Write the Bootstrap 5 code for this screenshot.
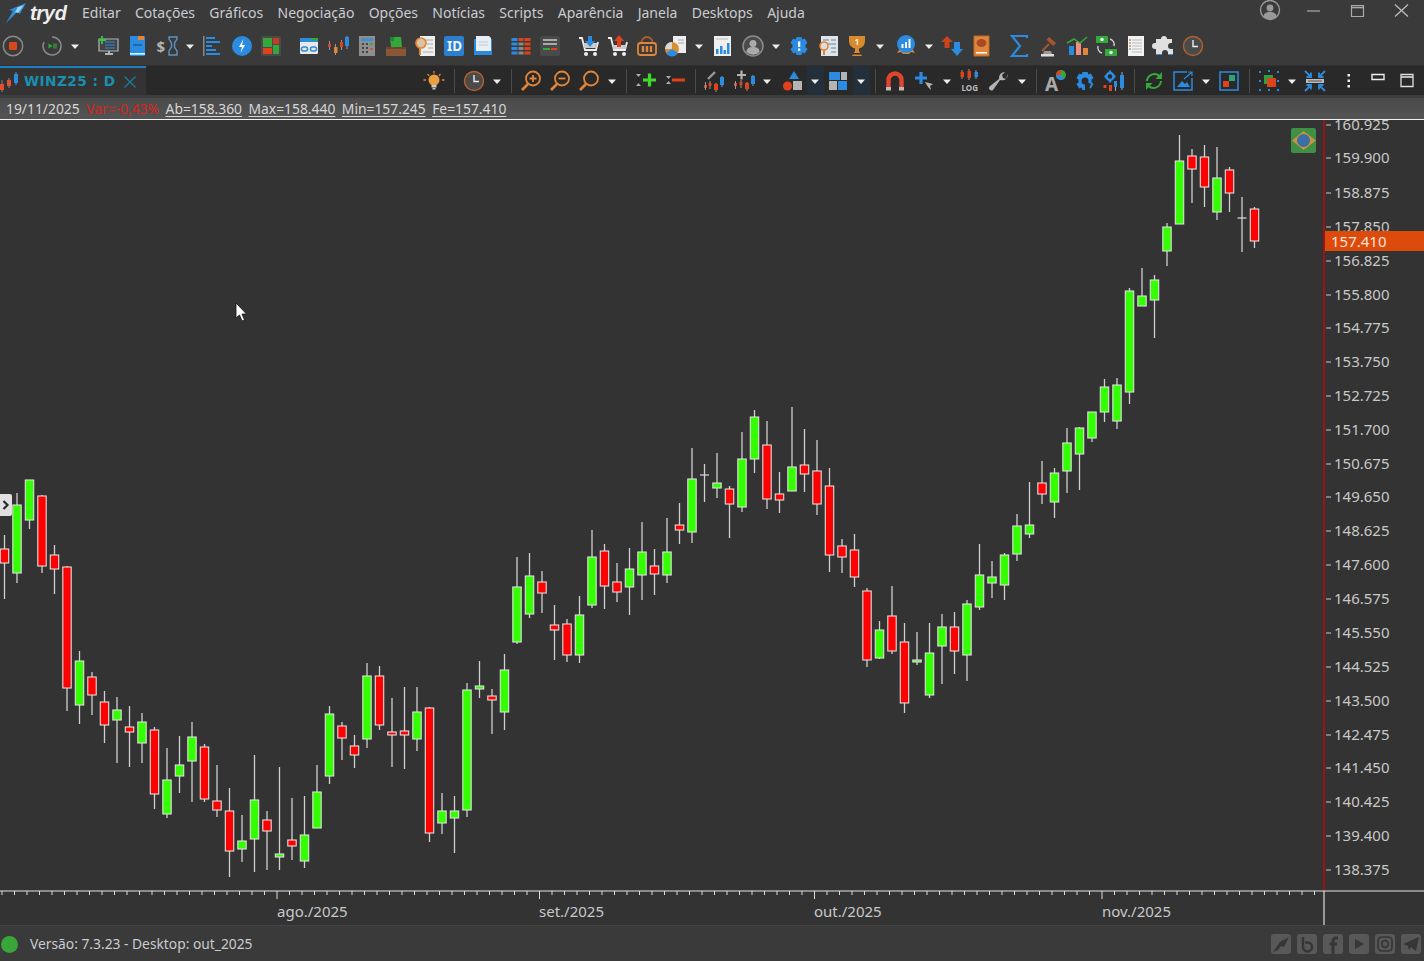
<!DOCTYPE html>
<html lang="pt-BR">
<head>
<meta charset="UTF-8">
<meta name="viewport" content="width=device-width, initial-scale=1.0">
<title>Tryd - WINZ25</title>
<link href="https://cdn.jsdelivr.net/npm/bootstrap@5.3.0/dist/css/bootstrap.min.css" rel="stylesheet">
<style>
body { background: #333; font-family: "Noto Sans", "Open Sans", sans-serif; color: #c9c9c9; width: 1424px; height: 961px; }
svg text { font-family: "Noto Sans", "Open Sans", sans-serif; }
.menu-row { height: 25px; background: #3a3a3a; padding-left: 5px; }
.logo-name { font-family: "Liberation Sans", sans-serif; font-weight: 700; font-style: italic; font-size: 20px; letter-spacing: -.3px; color: #eee; line-height: 24px; margin-left: 3px; width: 52px; }
.menu-item { font-size: 14px; color: #c9ccd0; line-height: 25px; }
.menu-list { gap: 14.3px; }
.win-ctl { width: 44px; height: 25px; }
.tool-row { height: 41px; background: #3a3a3a; margin-left: -1.5px; }
.tab-row { height: 29px; background: #292929; box-shadow: 0 -1px 0 #303030; }
.chart-tab { width: 146px; height: 29px; background: #333; border-top: 2px solid #1f7fc4; font-family: "DejaVu Sans", sans-serif; font-weight: 700; font-size: 13.7px; letter-spacing: .45px; color: #1a8fb0; }
.chart-tab-name { margin-left: 4px; }
.tool-group { padding-right: 2.5px; }
.t-ico { width: 29px; height: 24px; }
.t-car { width: 17px; height: 24px; }
.t-ico svg, .t-car svg { width: 24px; height: 24px; flex-shrink: 0; overflow: visible; }
.t-sep { width: 11px; height: 24px; }
.t-sep::after { content: ""; width: 1px; height: 24px; background: #4c4c4c; }
.t-box { height: 29px; background: #232f3b; }
.g1 { width: 1px; } .g2 { width: 2px; } .g3 { width: 3px; } .g5 { width: 5px; } .g9 { width: 9px; } .g10 { width: 10px; }
.band { height: 3px; background: #3d3d3d; }
.quote-bar { height: 22px; background: linear-gradient(#4b4b4b, #535353); border-bottom: 1px solid #f0f0f0; font-size: 13.85px; line-height: 20px; padding-left: 6px; color: #d6d6d6; gap: 6.500px; }
.quote-var { color: #d8241c; }
.quote-link { text-decoration: underline; text-underline-offset: 2px; }
.chart-area { height: 805px; }
.chart-area svg { display: block; }
.foot-bar { height: 36px; background: #3a3a3a; border-top: 1px solid #444; font-size: 13.8px; color: #c9ccd0; padding: 1px 3px 0 1px; }
.foot-dot { width: 17px; height: 17px; background: #3aa63a; border-radius: 50%; margin-right: 12px; }
.foot-social { gap: 6px; }
.foot-social svg { width: 20px; height: 20px; display: block; }
</style>
</head>
<body class="d-flex flex-column overflow-hidden">

<nav class="menu-row d-flex align-items-center">
  <svg width="22" height="22" viewBox="0 0 22 22"><path d="M1 21 8 9 4 8 21 1 15 12l-3-2z" fill="#2c8fd8"/><path d="M5 19 10 10l3 1 6-8-8 3 2-1z" fill="#9fd4f5"/></svg>
  <span class="logo-name">tryd</span>
  <div class="menu-list d-flex">
    <span class="menu-item">Editar</span>
    <span class="menu-item">Cotações</span>
    <span class="menu-item">Gráficos</span>
    <span class="menu-item">Negociação</span>
    <span class="menu-item">Opções</span>
    <span class="menu-item">Notícias</span>
    <span class="menu-item">Scripts</span>
    <span class="menu-item">Aparência</span>
    <span class="menu-item">Janela</span>
    <span class="menu-item">Desktops</span>
    <span class="menu-item">Ajuda</span>
  </div>
  <div class="ms-auto d-flex align-items-center">
    <svg class="win-ctl" viewBox="0 0 44 25"><circle cx="22" cy="10" r="9.5" fill="none" stroke="#999" stroke-width="1.4"/><circle cx="22" cy="8" r="3.4" fill="#999"/><path d="M15.5 17c0-4 3-5 6.500-5s6.500 1 6.500 5a9 9 0 0 1-13 0z" fill="#999"/></svg>
    <svg class="win-ctl" viewBox="0 0 44 25"><path d="M15 11h13" stroke="#aaa" stroke-width="1.2"/></svg>
    <svg class="win-ctl" viewBox="0 0 44 25"><path d="M15.500 5.500h12v11h-12z" fill="none" stroke="#aaa" stroke-width="1.200"/><path d="M15.500 7.500h12" stroke="#aaa" stroke-width="1.600"/></svg>
    <svg class="win-ctl" viewBox="0 0 44 25"><path d="M15 4.500l13 12M28 4.500l-13 12" stroke="#bbb" stroke-width="1.300"/></svg>
  </div>
</nav>

<div id="tools1" class="tool-row d-flex align-items-center"></div>

<div class="tab-row d-flex align-items-center justify-content-between">
  <div class="chart-tab d-flex align-items-center">
    <svg width="20" height="22" viewBox="0 0 20 22"><path d="M2 9v12M9 7v10M16 1v13" stroke="#888"/><rect x="0" y="13" width="4" height="6" fill="#e0502c"/><rect x="7" y="9" width="4" height="6" fill="#e0502c"/><rect x="14" y="3" width="4" height="9" fill="#2b8be0"/></svg>
    <span class="chart-tab-name">WINZ25 : D</span>
    <svg class="ms-2" width="14" height="14" viewBox="0 0 14 14"><path d="M1.500 1.500l11 11M12.500 1.500l-11 11" stroke="#1a7fa0" stroke-width="1.200"/></svg>
  </div>
  <div id="tools2" class="tool-group d-flex align-items-center"></div>
</div>
<div class="band"></div>

<div class="quote-bar d-flex align-items-center">
  <span>19/11/2025</span>
  <span class="quote-var">Var=-0,43%</span>
  <span class="quote-link">Ab=158.360</span>
  <span class="quote-link">Max=158.440</span>
  <span class="quote-link">Min=157.245</span>
  <span class="quote-link">Fe=157.410</span>
</div>

<div class="chart-area">
  <svg id="chart" width="1424" height="805" viewBox="0 120 1424 805"></svg>
</div>

<footer class="foot-bar d-flex align-items-center">
  <span class="foot-dot"></span>
  <span>Versão: 7.3.23 - Desktop: out_2025</span>
  <div class="foot-social d-flex ms-auto">
    <svg viewBox="0 0 20 20"><rect width="20" height="20" rx="3" fill="#585858"/><path d="M2 18 9 8l9-5-5 10-3-1-3 4z" fill="#363636"/></svg>
    <svg viewBox="0 0 20 20"><rect width="20" height="20" rx="3" fill="#585858"/><path d="M6 3v10a4.500 4.500 0 1 0 4.500-4.500H8" fill="none" stroke="#363636" stroke-width="2.500"/></svg>
    <svg viewBox="0 0 20 20"><rect width="20" height="20" rx="3" fill="#585858"/><path d="M15 4h-2a3 3 0 0 0-3 3v13M6.500 10H14" fill="none" stroke="#363636" stroke-width="3"/></svg>
    <svg viewBox="0 0 20 20"><rect width="20" height="20" rx="3" fill="#585858"/><path d="M6 5l9 5-9 5z" fill="#363636"/></svg>
    <svg viewBox="0 0 20 20"><rect width="20" height="20" rx="3" fill="#585858"/><rect x="3" y="3" width="14" height="14" rx="4" fill="none" stroke="#363636" stroke-width="1.700"/><circle cx="10" cy="10" r="3.300" fill="none" stroke="#363636" stroke-width="1.700"/></svg>
    <svg viewBox="0 0 20 20"><rect width="20" height="20" rx="3" fill="#585858"/><path d="M2 10 18 3l-3 14-5-4-2 3-1-4z" fill="#363636"/></svg>
  </div>
</footer>

<script>
// toolbar icons, drawn on a 24px box at screen size
const ln = (d, c, w) => `<path d="${d}" fill="none" stroke="${c}" stroke-width="${w || 1.5}"/>`;
const fl = (d, c) => `<path d="${d}" fill="${c}"/>`;
const bx = (x, y, w, h, c) => `<rect x="${x}" y="${y}" width="${w}" height="${h}" fill="${c}"/>`;
const BLUE = '#2b8be0', ORG = '#e0853a', RED = '#e0431c', GRN = '#35a83c', GRY = '#b4b4b4', WHT = '#eee';
const tx = (x, y, s, t, c, extra) => `<text x="${x}" y="${y}" font-size="${s}" fill="${c}" font-weight="700" ${extra || ''}>${t}</text>`;
const clock = `<circle cx="12" cy="12" r="9.500" fill="#4a4a4a" stroke="#b5602c" stroke-width="1.400"/>` + ln('M12 6v6.500h5', WHT, 1.4);
const mag = extra => `<circle cx="14" cy="9.500" r="7" fill="none" stroke="${ORG}" stroke-width="1.800"/>` + ln('M9 15l-6 6', ORG, 2.6) + (extra || '');
const candles = (x, y) => `<g transform="translate(${x} ${y})">` + ln('M2 5v8M8 7v9M14 0v11', '#999', 1) + bx(0.5, 7, 3, 3, RED) + bx(6, 8, 4, 6, RED) + bx(12, 1, 4, 8, BLUE) + `</g>`;
const COG = 'M9.500 3h5l.8 2.600 2.500-1 2.700 4.400-2 1.800v2.400l2 1.800-2.700 4.400-2.500-1-.8 2.600h-5l-.8-2.600-2.500 1-2.700-4.400 2-1.800v-2.400l-2-1.800 2.700-4.400 2.500 1z';

const ICONS = {
  caret: fl('M8 10.500h8l-4 4.500z', WHT),
  stop: `<circle cx="12" cy="12" r="9.700" fill="none" stroke="#8a8a8a" stroke-width="1.500"/><rect x="8" y="8" width="8" height="8" rx="1" fill="#d9481c"/>`,
  replay: ln('M12 3a9 9 0 1 1-8 5', '#8a8a8a') + fl('M8.500 9.500l4 2.500-4 2.500z', GRN) + ln('M14 9.500v5M16 9.500v5', GRN, 1.2),
  monitor: bx(3, 5, 19, 12, '#444') + ln('M3 5h19v12H3z', GRY, 1.2) + ln('M9 8h10M9 11h10M9 14h10', BLUE, 1.200) + ln('M9 20h8M13 17v3', GRY, 2) + ln('M2 6h8M6 2v8', '#3ec24a', 1.800),
  book: `<rect x="5" y="2" width="15" height="20" rx="1" fill="${BLUE}"/>` + bx(13, 2, 6, 4, ORG) + ln('M8 11h9', '#1a5a90', 1.400) + bx(5, 19, 15, 1.600, '#dff'),
  money: tx(1.500, 18, 15, '$', GRY, 'font-family="Liberation Sans"') + ln('M14 3h8v2l-2.500 4v4l2.500 4v4h-8v-4l2.500-4V9L14 5z', '#5b94c8', 1.400),
  align: bx(2, 2, 1.500, 20, '#888') + bx(5, 3, 9, 2, BLUE) + bx(5, 7, 14, 2, BLUE) + bx(5, 11, 6, 2, BLUE) + bx(5, 15, 10, 2, BLUE) + bx(5, 19, 14, 2, BLUE),
  bolt: `<circle cx="12" cy="12" r="10" fill="${BLUE}"/>` + fl('M13.500 5 9 13h3l-1.500 6 4.500-8h-3z', '#fff'),
  tiles: `<rect x="2" y="2" width="20" height="20" rx="1.500" fill="#4a4a4a"/>` + bx(4, 4, 9, 9, GRN) + bx(14, 4, 6, 6, '#c83a22') + bx(14, 11, 6, 9, GRN) + bx(4, 14, 9, 6, RED),
  card: `<rect x="3" y="4" width="18" height="16" rx="1" fill="#e8e8e8"/>` + bx(3, 4, 18, 4, BLUE) + bx(14, 4, 7, 2.500, GRN) + `<rect x="4.500" y="13" width="6" height="4" rx="2" fill="none" stroke="${BLUE}" stroke-width="1.500"/><rect x="13.500" y="13" width="6" height="4" rx="2" fill="none" stroke="${BLUE}" stroke-width="1.500"/>`,
  candles: ln('M3.500 7v9M9.500 10v11M15.500 6v10M21 2v13', '#999', 1) + bx(2, 10, 3, 3, RED) + bx(8, 13, 3.500, 6, ORG) + bx(14, 8, 3, 5, RED) + bx(19, 3, 4, 9, BLUE),
  calc: bx(4, 2, 16, 20, '#8e8e8e') + bx(6, 4, 12, 3, '#3e93cf') + ln('M7 10h2M7 14h2M7 18h2M11 10h2M11 14h2M11 18h2', '#444', 2) + ln('M15 10h3M16.500 8.500v3', GRN, 1.200) + ln('M15 15h3', RED, 1.400),
  inbox: bx(2, 13, 20, 9, '#8a5638') + bx(2, 13, 20, 2, '#6e452c') + fl('M6 3h11l1 10H7z', GRN) + bx(6, 3, 4, 4, '#2a8030'),
  docs: bx(7, 2, 15, 20, '#efefef') + ln('M13 6h7M14 10h6M15 14h5M10 18h10', '#aaa', 1) + `<circle cx="8" cy="9" r="5" fill="#d8c2a8" stroke="${ORG}" stroke-width="1.700"/>` + ln('M7 14v7', ORG, 2),
  id: `<rect x="2" y="2" width="20" height="20" rx="2" fill="#2a7fd0"/>` + tx(5, 17, 13.500, 'ID', '#f2f2f2', 'font-family="Liberation Sans"'),
  book2: bx(3, 5, 18, 16, '#2b8be0') + fl('M5 2h13l2 2v13H5z', '#e8eef2') + ln('M8 8h9M8 11h9', '#bcd', 1),
  grid: [4, 8.500, 13, 17.500].map(y => bx(2.500, y, 6, 3, BLUE) + bx(9.500, y, 5, 3, y < 8 ? RED : '#888') + bx(15.500, y, 6, 3, RED)).join(''),
  panel: `<rect x="2" y="2" width="20" height="20" rx="2.500" fill="#4a4a4a"/>` + bx(5, 5, 14, 2, '#aaa') + bx(5, 9, 14, 2, '#aaa') + bx(5, 14, 7, 2, GRN) + bx(13, 14, 6, 2, RED),
  cartd: ln('M2 4h3l3 12h11l2-8', WHT, 1.800) + bx(7, 9, 13, 5, '#ccc') + `<circle cx="9" cy="20" r="2" fill="${WHT}"/><circle cx="18" cy="20" r="2" fill="${WHT}"/>` + fl('M11 2h4v5h3l-5 6-5-6h3z', BLUE),
  cartu: ln('M2 4h3l3 12h11l2-8', WHT, 1.800) + bx(7, 11, 13, 4, '#ccc') + `<circle cx="9" cy="20" r="2" fill="${WHT}"/><circle cx="18" cy="20" r="2" fill="${WHT}"/>` + fl('M13 1l5 6h-3v6h-4V7H8z', RED),
  basket: ln('M6 10a6 7 0 0 1 12 0', '#a85a30', 1.800) + `<rect x="3" y="9" width="18" height="12" rx="2.500" fill="none" stroke="${ORG}" stroke-width="1.800"/>` + ln('M8 12v6M12 12v6M16 12v6', ORG, 2.400),
  piedoc: bx(9, 2, 13, 17, '#eee') + ln('M14 6h6M14 9h6', '#aaa', 1) + `<circle cx="8" cy="15" r="7" fill="#d99030"/>` + fl('M8 15V8a7 7 0 0 0-7 7z', '#d8d8d8') + fl('M8 15 2 19a7 7 0 0 0 12 0z', BLUE),
  chartdoc: bx(4, 2, 17, 20, '#f0f0f0') + ln('M6 5h12', '#bbb', 1) + bx(6, 15, 2.500, 5, BLUE) + bx(10, 12, 2.500, 8, BLUE) + bx(13.500, 16, 2.500, 4, BLUE) + bx(17, 9, 2.500, 11, BLUE),
  user: `<circle cx="12" cy="12" r="10" fill="#4a4a4a" stroke="#8c8c8c" stroke-width="1.500"/><circle cx="12" cy="9.500" r="3.500" fill="#aaa"/>` + fl('M5.500 18c0-4 3-5 6.500-5s6.500 1 6.500 5a9 9 0 0 1-13 0z', '#aaa'),
  gearx: fl(COG, BLUE) + bx(11, 7.500, 2.300, 5.500, '#fff') + bx(11, 14.500, 2.300, 2.300, '#fff'),
  docs2: bx(5, 2, 17, 20, '#dfe4e8') + ln('M7 6h6M15 6h5M7 10h13M15 14h5M15 18h5', '#8fa6b8', 1.500) + `<circle cx="8" cy="12" r="4" fill="#ddd" stroke="${ORG}" stroke-width="1.600"/>` + ln('M8 16v5', ORG, 2),
  trophy: fl('M4 2h16v5a8 8 0 0 1-6 7.500V17l3 5H7l3-5v-2.500A8 8 0 0 1 4 7z', '#d98a2c') + bx(8, 19, 8, 1.500, '#333') + tx(9.500, 10.500, 8.500, '1', '#fff2d0', 'font-family="Liberation Sans"'),
  medal: fl('M3 19l4-6 10 0 4 6-4-1-2 2H9l-2-2z', ORG) + `<circle cx="12" cy="10" r="9" fill="${BLUE}"/>` + bx(7.500, 10, 2, 4, '#fff') + bx(11, 8, 2, 6, '#fff') + bx(14.500, 5, 2, 9, '#fff'),
  arrows: fl('M7 2l6 6H9.500v6h-5V8H1z', '#c9431f') + fl('M14 8h6v7h3l-6 7-6-7h3z', BLUE),
  obook: bx(5, 2, 15, 20, ORG) + ln('M5 2h15v20H5z', '#b86a28', 1) + `<ellipse cx="12.500" cy="9" rx="5" ry="4" fill="#a84a24"/>` + bx(7, 18, 11, 1.500, '#fff'),
  sigma: ln('M20 4V2H5l8 10-8 10h15v-2', BLUE, 2.200),
  gavel: fl('M13 3l7 6-2.500 3-7-6z', '#a5562e') + ln('M13 10l-7 7', '#a5562e', 2.200) + bx(5, 20, 13, 2.500, '#ddd') + fl('M7 20l1-3h7l1 3z', '#999'),
  barchart: bx(4, 12, 5, 9, BLUE) + bx(11, 8, 5, 13, '#ee9080') + bx(18, 14, 5, 7, ORG) + ln('M2 9l7-4 6 4 7-6', GRN, 1.500),
  swap: bx(2, 2, 12, 7, GRN) + bx(11, 15, 12, 7, GRN) + `<circle cx="8" cy="5.500" r="1.800" fill="#cfe"/><circle cx="17" cy="18.500" r="1.800" fill="#cfe"/>` + ln('M16 5a6 6 0 0 1 4 7M8 19a6 6 0 0 1-4-7', '#ccc', 1.500),
  listdoc: bx(5, 2, 16, 20, '#f2f2f2') + ln('M9 6h10M9 9h10M9 12h10M9 15h10M9 18h10', '#bbb', 1) + ln('M6 6h2M6 12h2', RED, 1) + ln('M6 9h2M6 15h2', GRN, 1),
  puzzle: fl('M9 5a3 3 0 0 1 6 0h5v4h-1a3 3 0 0 0 0 6h2v5h-5v-1a3 3 0 0 0-6 0v1H4v-5H3a3 3 0 0 1 0-6h1V5z', '#e0e0e0') + ln('M4 20.500h6M16 20.500h5', BLUE, 1),
  clock,
  bulb: `<circle cx="12" cy="11" r="5.500" fill="#eaa040"/>` + bx(9.500, 16, 5, 2.500, '#ccc') + bx(10.500, 19, 3, 1.500, '#ccc') + ln('M12 2v2.500M4 11H1.500M22.500 11H20M5.500 5l1.700 1.700M18.500 5l-1.700 1.700', ORG, 1.300),
  zoomin: mag(ln('M10.500 9.500h7M14 6v7', ORG, 1.800)),
  zoomout: mag(ln('M10.500 9.500h7', ORG, 1.800)),
  zoom: mag(),
  plusg: fl('M2 5h5L4.500 8zM2 17h5l-2.500-3z', '#aaa') + ln('M9 11h13M15.500 4.500v13', '#42d92c', 3.200),
  minusr: fl('M3 7h5L5.500 10zM3 15h5l-2.500-3z', '#aaa') + ln('M9 11h13', RED, 3),
  ind: ln('M5 10 12 3', '#999', 2.400) + candles(5, 7) + bx(1, 16, 3, 3, RED) + ln('M2.500 13v8', '#999', 1),
  plusind: ln('M5 6h9M9.500 1.500v9', GRY, 2.200) + candles(7, 6) + bx(2, 14, 3, 3, RED) + ln('M3.500 12v8', '#999', 1),
  shapes: fl('M14 2l5 8h-10z', BLUE) + `<circle cx="7.500" cy="17" r="4.500" fill="${RED}"/>` + bx(13, 12, 9, 9, GRY),
  tiles2: bx(3, 3, 11, 8, BLUE) + bx(15, 3, 6, 8, GRY) + bx(3, 12, 8, 9, GRY) + bx(12, 12, 9, 9, BLUE),
  magnet: ln('M5.500 19V11a6.500 6.500 0 0 1 13 0v8', '#e0452c', 4.400) + bx(3, 18, 5, 3.500, '#bbb') + bx(16, 18, 5, 3.500, '#bbb'),
  pluscur: ln('M3 9h12M9 3v12', BLUE, 3.200) + fl('M13 13l8 2-3 2 1 4-3-3z', GRY),
  log: [[4, 1, 5, RED], [11, 0, 7, RED], [18, 1, 5, BLUE]].map(c => ln(`M${c[0]} ${c[1]}v${c[2] + 4}`, '#999', 1) + bx(c[0] - 1.500, c[1] + 2, 3.500, c[2], c[3])).join('') + tx(3.500, 21.500, 8, 'LOG', '#bbb', 'font-family="Liberation Sans"'),
  wrench: fl('M21 5a6 6 0 0 1-8 6L6 21a2.500 2.500 0 0 1-3.500-3.500l9.500-7.500a6 6 0 0 1 6-7l-3 3 1 3 3 1z', GRY),
  apie: tx(1, 22, 19, 'A', '#aaa', 'font-family="Liberation Serif"') + `<circle cx="17" cy="6" r="5" fill="${GRN}"/>` + fl('M17 6V1a5 5 0 0 0-5 5z', RED) + fl('M17 6h-5a5 5 0 0 0 8 4z', BLUE),
  gear: fl(COG, BLUE) + `<circle cx="12" cy="12" r="3.500" fill="#292929"/>` + fl('M12 12l6 3-3 7h-3z', '#292929') ,
  gearc: `<circle cx="8" cy="7.500" r="3.500" fill="none" stroke="${BLUE}" stroke-width="2.500"/>` + ln('M8 1.500v2.500M8 11v2.500M2.500 7.500h2.500M11 7.500h2.500', BLUE, 2.400) + bx(1.500, 16, 3, 3, RED) + bx(7, 16, 3, 6, RED) + ln('M13.500 12v10M20 3v18', '#aaa', 1) + bx(12, 12, 3, 6, BLUE) + bx(18, 6, 4, 13, BLUE),
  refresh: ln('M5 12a7.500 7.500 0 0 1 12.500-5', GRN, 2) + fl('M20 3v7h-6.500z', GRN) + ln('M19 12a7.500 7.500 0 0 1-12.500 5', GRN, 2) + fl('M4 21v-7h6.500z', GRN),
  image: ln('M16 3H3v18h18V9', BLUE, 1.500) + fl('M6 18l5-6 3 3 2-2 3 5z', BLUE) + ln('M13 10l8-7M17 3h4v4', BLUE, 1.200),
  split: ln('M3 3h18v18H3z', BLUE, 1.500) + bx(12, 6, 6, 6, '#2ea576') + bx(6, 12, 6, 6, RED),
  layers: bx(7, 6, 9, 9, '#2ea040') + bx(10, 9, 9, 9, RED) + [[3, 3], [12, 2], [21, 3], [3, 12], [21, 12], [3, 21], [12, 21], [21, 21]].map(p => bx(p[0] - 1, p[1] - 1, 2, 2, BLUE)).join(''),
  expand: ln('M2 2l6 6M8 3.500V8H3.500M22 2l-6 6M16 3.500V8h4.500M2 22l6-6M8 20.500V16H3.500M22 22l-6-6M16 20.500V16h4.500', BLUE, 1.800) + bx(3, 10, 18, 4, '#bbb') + ln('M5 12h14', '#555', 1),
  dots: bx(10.500, 5, 2.500, 2.500, WHT) + bx(10.500, 10.500, 2.500, 2.500, WHT) + bx(10.500, 16, 2.500, 2.500, WHT),
  restore: ln('M6 5.500h12v5H6z', '#eee', 1.400),
  maximize: ln('M6 5.500h12v12H6z', '#ddd', 1.300) + ln('M6 8h12', '#ddd', 1.600)
};

// g<n> = spacer, sep = divider, caretb = caret on the dark selected box
function fillTools(id, spec) {
  document.getElementById(id).innerHTML = spec.split(/\s+/).map(name => {
    if (/^g\d+$/.test(name)) return `<span class="${name} flex-shrink-0"></span>`;
    if (name === 'sep') return '<span class="t-sep d-flex justify-content-center flex-shrink-0"></span>';
    const box = name === 'caretb';
    const isCaret = box || name === 'caret';
    const cls = (isCaret ? 't-car' : 't-ico') + (box ? ' t-box' : '');
    return `<span class="${cls} d-flex align-items-center justify-content-center flex-shrink-0"><svg viewBox="0 0 24 24">${ICONS[isCaret ? 'caret' : name]}</svg></span>`;
  }).join('');
}

fillTools('tools1', 'stop g10 replay caret g10 monitor book g1 money caret align bolt tiles g9 card candles calc inbox docs id book2 g9 grid panel g10 cartd cartu basket piedoc caret chartdoc g2 user caret gearx docs2 trophy caret g3 medal caret arrows obook g9 sigma gavel barchart swap listdoc puzzle clock');
fillTools('tools2', 'bulb sep clock caret sep zoomin zoomout zoom caret sep plusg minusr sep ind plusind caret g2 shapes caretb tiles2 caretb sep magnet pluscur caret log wrench caret sep apie gear gearc sep refresh image caret split sep layers caret expand g5 dots restore maximize');

// candles: colour, high, body top, body bottom, low (screen y). x = 4.5 + 12.5 * index
const CANDLES = [
  ['r',535,549,563,599],['g',493,505,573,583],['g',480,480,520,529],['r',495,496,566,573],['r',545,555,569,594],
  ['r',566,567,688,711],['g',651,661,705,724],['r',672,677,695,715],['r',691,702,725,743],['g',697,710,720,763],
  ['r',706,727,732,767],['g',713,722,743,763],['r',727,730,794,809],['g',748,780,814,818],['g',736,765,776,793],
  ['g',722,737,761,802],['r',744,747,799,802],['r',765,801,810,817],['r',788,811,851,877],['g',815,841,849,862],
  ['g',755,800,839,872],['r',811,820,831,870],['g',767,854,857,870],['r',798,840,846,860],['g',796,835,861,868],
  ['g',765,792,828,828],['g',706,714,776,784],['r',722,726,738,760],['r',735,746,755,768],['g',663,676,739,748],
  ['r',666,676,725,730],['r',698,732,735,767],['r',687,731,735,769],['g',687,712,739,751],['r',707,708,833,842],
  ['g',793,811,823,834],['g',796,811,818,853],['g',683,690,810,817],['g',661,686,689,698],['r',689,696,700,734],
  ['g',654,670,712,730],['g',557,587,642,644],['g',553,576,614,618],['r',571,582,593,613],['r',605,625,630,660],
  ['r',619,624,655,662],['g',596,615,655,663],['g',530,557,605,608],['r',544,551,586,609],['r',563,582,592,602],
  ['g',548,569,587,615],['g',522,552,575,600],['r',549,566,574,595],['g',518,552,575,583],['r',503,525,530,544],
  ['g',448,479,532,543],['d',464,475,475,502],['g',453,483,488,498],['r',486,489,504,538],['g',432,459,507,512],
  ['g',410,417,459,473],['r',421,445,499,509],['r',472,494,500,513],['g',407,467,491,491],['r',429,465,474,492],
  ['r',440,471,504,515],['r',468,486,555,572],['r',539,546,557,573],['r',534,550,577,587],['r',588,591,660,667],
  ['g',621,630,658,659],['r',586,616,651,654],['r',623,642,703,713],['g',632,660,662,665],['g',623,653,695,698],
  ['g',614,627,646,684],['r',612,627,651,674],['g',600,604,655,681],['g',544,575,607,610],['g',561,577,583,598],
  ['g',553,555,585,600],['g',514,526,554,561],['g',482,525,534,538],['r',461,483,494,504],['g',468,473,502,518],
  ['g',428,443,471,493],['g',427,428,454,490],['g',412,412,438,442],['g',379,387,412,422],['g',378,385,421,429],
  ['g',288,291,392,404],['g',268,296,306,306],['g',275,280,300,338],['g',223,227,251,266],['g',135,161,224,224],
  ['r',149,156,169,203],['r',145,157,187,207],['g',147,178,212,220],['r',167,170,193,212],['d',197,218,218,252],
  ['r',207,209,241,248]
];

const AXIS = [[125,'160.925'],[158,'159.900'],[193,'158.875'],[227,'157.850'],[261,'156.825'],[295,'155.800'],[328,'154.775'],[362,'153.750'],[396,'152.725'],[430,'151.700'],[464,'150.675'],[497,'149.650'],[531,'148.625'],[565,'147.600'],[599,'146.575'],[633,'145.550'],[667,'144.525'],[701,'143.500'],[735,'142.475'],[768,'141.450'],[802,'140.425'],[836,'139.400'],[870,'138.375']];
const MONTHS = [[277,'ago./2025'],[539,'set./2025'],[814,'out./2025'],[1102,'nov./2025']];

let out = '';
CANDLES.forEach((c, i) => {
  const x = 4.5 + 12.5 * i;
  out += `<path d="M${x} ${c[1]}V${c[4]}" stroke="#cfcfcf" stroke-width="1.300"/>`;
  if (c[0] === 'd') out += `<path d="M${x - 4.500} ${c[2]}h9" stroke="#ddd" stroke-width="1.200"/>`;
  else out += `<rect x="${x - 4.200}" y="${c[2]}" width="8.400" height="${c[3] - c[2]}" fill="${c[0] === 'r' ? '#ff0000' : '#33ff00'}" stroke="#dedede" stroke-width="1.100"/>`;
});

// price axis
out += '<path d="M1324 120V891" stroke="#e00000" stroke-width="1.200"/>';
AXIS.forEach(a => {
  out += `<path d="M1326 ${a[0]}h5" stroke="#ccc"/><text x="1334" y="${a[0] + 5}" font-size="15" fill="#c8c8c8">${a[1]}</text>`;
});
out += '<rect x="1325" y="231" width="99" height="20" fill="#dc4a0c"/><text x="1331" y="247" font-size="15" fill="#ffe6d8">157.410</text>';

// time axis
out += '<path d="M0 891H1424" stroke="#e6e6e6" stroke-width="1.200"/><path d="M1324 891V925" stroke="#ddd" stroke-width="1.200"/>';
for (let k = 0; k < 106; k++) {
  const x = 2 + 12.5 * k;
  out += `<path d="M${x} 891v${MONTHS.some(m => m[0] === Math.floor(x)) ? 8 : 4}" stroke="#ddd"/>`;
}
MONTHS.forEach(m => { out += `<text x="${m[0]}" y="916.500" font-size="15" fill="#c8c8c8">${m[1]}</text>`; });

// flag, side tab and mouse pointer sit over the plot
out += '<rect x="1291" y="128" width="25" height="25" rx="2" fill="#3f8f45"/><path d="M1292 140.500 1303.500 131 1316 140.500 1303.500 150z" fill="#c8923e"/><circle cx="1303.500" cy="140.500" r="6.500" fill="#3a6ea5"/>';
out += '<rect x="-2" y="494" width="14" height="22" rx="2" fill="#e0e0e0"/><path d="M3.500 501l4 4-4 4" fill="none" stroke="#2a2a2a" stroke-width="2.200"/>';
out += '<path d="M236 303v15l3.500-3 2.500 6 2.500-1-2.500-6h4.500z" fill="#fff" stroke="#111" stroke-width=".8"/>';
document.getElementById('chart').innerHTML = out;
</script>
<script src="https://cdn.jsdelivr.net/npm/bootstrap@5.3.0/dist/js/bootstrap.bundle.min.js"></script>
</body>
</html>
